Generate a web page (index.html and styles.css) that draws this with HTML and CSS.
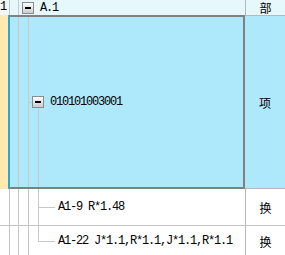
FILE: index.html
```html
<!DOCTYPE html>
<html lang="zh-CN">
<head>
    <meta charset="UTF-8">
    <title>定额树</title>
    <link rel="stylesheet" href="styles.css">
</head>
<body>
    <div class="grid">
        <div class="row head">
            <div class="num">1</div>
            <div class="tree">
                <span class="toggle"></span>
                <span class="code">A.1</span>
            </div>
            <div class="kind">部</div>
        </div>

        <div class="row sel">
            <div class="num"></div>
            <div class="tree">
                <span class="toggle"></span>
                <span class="code">010101003001</span>
            </div>
            <div class="kind">项</div>
        </div>

        <div class="row leaf">
            <div class="num"></div>
            <div class="tree">
                <span class="code">A1-9 R*1.48</span>
            </div>
            <div class="kind">换</div>
        </div>

        <div class="row leaf last">
            <div class="num"></div>
            <div class="tree">
                <span class="code">A1-22 J*1.1,R*1.1,J*1.1,R*1.1</span>
            </div>
            <div class="kind">换</div>
        </div>
    </div>
</body>
</html>
```

FILE: styles.css
```css
/* tree grid */
body {
    margin: 0;
    background-color: #fff;
    font-family: "Liberation Mono", "Noto Sans CJK SC", monospace;
    font-size: 12px;
    color: #000;
    overflow: hidden;
}
.grid {
    width: 285px;
}
.row {
    display: flex;
}
.num {
    width: 10px;
    box-sizing: border-box;
    border-right: 1px solid #c4c4c4;
    text-align: right;
    padding-right: 4px;
    line-height: 15px;
    overflow: hidden;
}
.tree {
    flex: 1;
    display: flex;
    align-items: center;
    box-sizing: border-box;
    background-repeat: no-repeat;
}
.kind {
    width: 40px;
    box-sizing: border-box;
    border-left: 1px solid #b8b8b8;
    display: flex;
    align-items: center;
    justify-content: center;
    font-family: "Noto Sans CJK SC", sans-serif;
    font-size: 12px;
}
.code {
    letter-spacing: -1.2px;
    white-space: nowrap;
}
.toggle {
    width: 12px;
    height: 12px;
    box-sizing: border-box;
    border: 1px solid #8c8c8c;
    background: linear-gradient(#000, #000) center / 6px 2px no-repeat,
                linear-gradient(#fdfdfd, #c9ccd2);
    margin-right: 6px;
}

/* header row */
.head {
    height: 15px;
    background-color: #e6f8fc;
}
.head .num {
    background-color: #f2f9fb;
}
.head .tree {
    padding-left: 12px;
    background-image: linear-gradient(#c8c8c8, #c8c8c8);
    background-position: 8px 0;
    background-size: 1px 100%;
}
.head .toggle {
    margin-top: 1px;
}

/* selected row */
.sel {
    height: 174px;
    background-color: #ade9fb;
}
.sel .num {
    background-color: #ffe9b0;
    border-right: 2px solid #2aa6dc;
}
.sel .tree {
    padding-left: 22px;
    border-top: 2px solid #808080;
    border-bottom: 2px solid #808080;
    border-right: 2px solid #808080;
    background-image: linear-gradient(#c8c8c8, #c8c8c8),
                      linear-gradient(#c8c8c8, #c8c8c8),
                      linear-gradient(#c8c8c8, #c8c8c8),
                      linear-gradient(#c8c8c8, #c8c8c8);
    background-position: 8px 0, 18px 0, 18px 50%, 28px 100%;
    background-size: 1px 100%, 1px 100%, 5px 1px, 1px 50%;
}
.sel .kind {
    border-left: none;
    border-top: 1px solid #b8b8b8;
    border-bottom: 1px solid #b8b8b8;
}

/* leaf rows */
.leaf {
    height: 36px;
    border-bottom: 1px solid #c4c4c4;
}
.leaf .tree {
    padding-left: 48px;
    background-image: linear-gradient(#c8c8c8, #c8c8c8),
                      linear-gradient(#c8c8c8, #c8c8c8),
                      linear-gradient(#c8c8c8, #c8c8c8),
                      linear-gradient(#c8c8c8, #c8c8c8);
    background-position: 8px 0, 18px 0, 28px 0, 28px 50%;
    background-size: 1px 100%, 1px 100%, 1px 100%, 17px 1px;
}
.leaf.last {
    height: 30px;
    border-bottom: none;
}
.leaf.last .tree {
    background-size: 1px 100%, 1px 100%, 1px 50%, 17px 1px;
}
```
